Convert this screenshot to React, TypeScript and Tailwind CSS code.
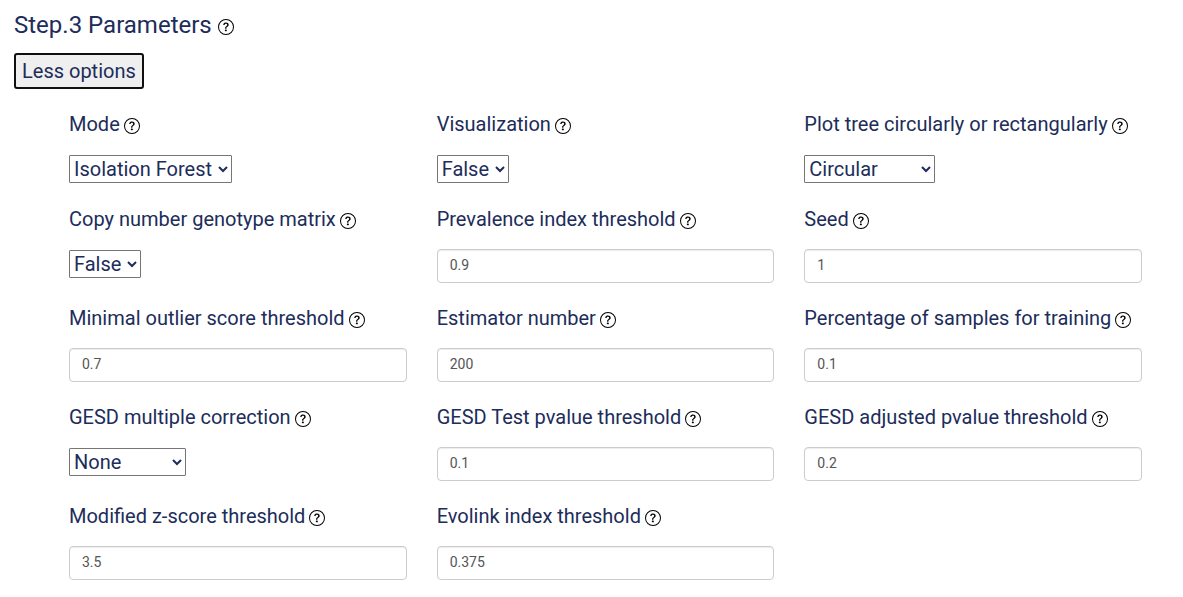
import { useState } from "react";
import { BsQuestionCircle } from "react-icons/bs";

type Param = {
  id: string;
  label: string;
  value: string;
  options?: string[];
};

const PARAMS: Param[] = [
  {
    id: "mode",
    label: "Mode",
    value: "Isolation Forest",
    options: ["Isolation Forest", "Gesd", "Z-score", "Cutoff"],
  },
  {
    id: "visualization",
    label: "Visualization",
    value: "False",
    options: ["False", "True"],
  },
  {
    id: "layout",
    label: "Plot tree circularly or rectangularly",
    value: "Circular",
    options: ["Circular", "Rectangular"],
  },
  {
    id: "copy-number",
    label: "Copy number genotype matrix",
    value: "False",
    options: ["False", "True"],
  },
  { id: "prevalence", label: "Prevalence index threshold", value: "0.9" },
  { id: "seed", label: "Seed", value: "1" },
  { id: "outlier", label: "Minimal outlier score threshold", value: "0.7" },
  { id: "estimators", label: "Estimator number", value: "200" },
  { id: "samples", label: "Percentage of samples for training", value: "0.1" },
  {
    id: "correction",
    label: "GESD multiple correction",
    value: "None",
    options: ["None", "Bonferroni", "FDR"],
  },
  { id: "pvalue", label: "GESD Test pvalue threshold", value: "0.1" },
  { id: "adjusted", label: "GESD adjusted pvalue threshold", value: "0.2" },
  { id: "z-score", label: "Modified z-score threshold", value: "3.5" },
  { id: "evolink", label: "Evolink index threshold", value: "0.375" },
];

const HelpIcon = () => (
  <BsQuestionCircle className="mt-1 size-4 shrink-0 text-black" />
);

const ParamField = ({ param }: { param: Param }) => {
  const { id, label, value, options } = param;

  return (
    <div className="flex flex-col gap-4">
      <div className="flex items-center gap-1">
        <label htmlFor={id} className="text-xl/7">
          {label}
        </label>
        <HelpIcon />
      </div>
      {options ? (
        <div className="flex h-[30px] items-center">
          <select
            id={id}
            defaultValue={value}
            className="h-7 rounded-[1px] border border-[#767676] bg-white pr-0.5 text-xl"
          >
            {options.map((o) => (
              <option key={o}>{o}</option>
            ))}
          </select>
        </div>
      ) : (
        <input
          id={id}
          type="text"
          defaultValue={value}
          className="h-[34px] w-full rounded-sm border border-[#ccc] bg-white px-3 pb-0.5 text-sm text-[#555] shadow-[inset_0_1px_1px_rgba(0,0,0,0.075)]"
        />
      )}
    </div>
  );
};

export default function App() {
  const [expanded, setExpanded] = useState(true);

  return (
    <main className="bg-white px-3.5 pt-[9px] font-[Roboto,sans-serif] text-[#202c5a]">
      <div className="flex items-center gap-1.5">
        <h2 className="text-2xl/8">Step.3 Parameters</h2>
        <HelpIcon />
      </div>
      <button
        type="button"
        onClick={() => setExpanded(!expanded)}
        className="mt-3 h-9 rounded-[3px] border-2 border-[#101010] bg-[#efefef] px-1.5 text-xl"
      >
        {expanded ? "Less options" : "More options"}
      </button>
      {expanded && (
        <div className="mt-[21px] mr-[27px] ml-[55px] grid grid-cols-3 gap-x-[30px] gap-y-[21px]">
          {PARAMS.map((p) => (
            <ParamField key={p.id} param={p} />
          ))}
        </div>
      )}
    </main>
  );
}
